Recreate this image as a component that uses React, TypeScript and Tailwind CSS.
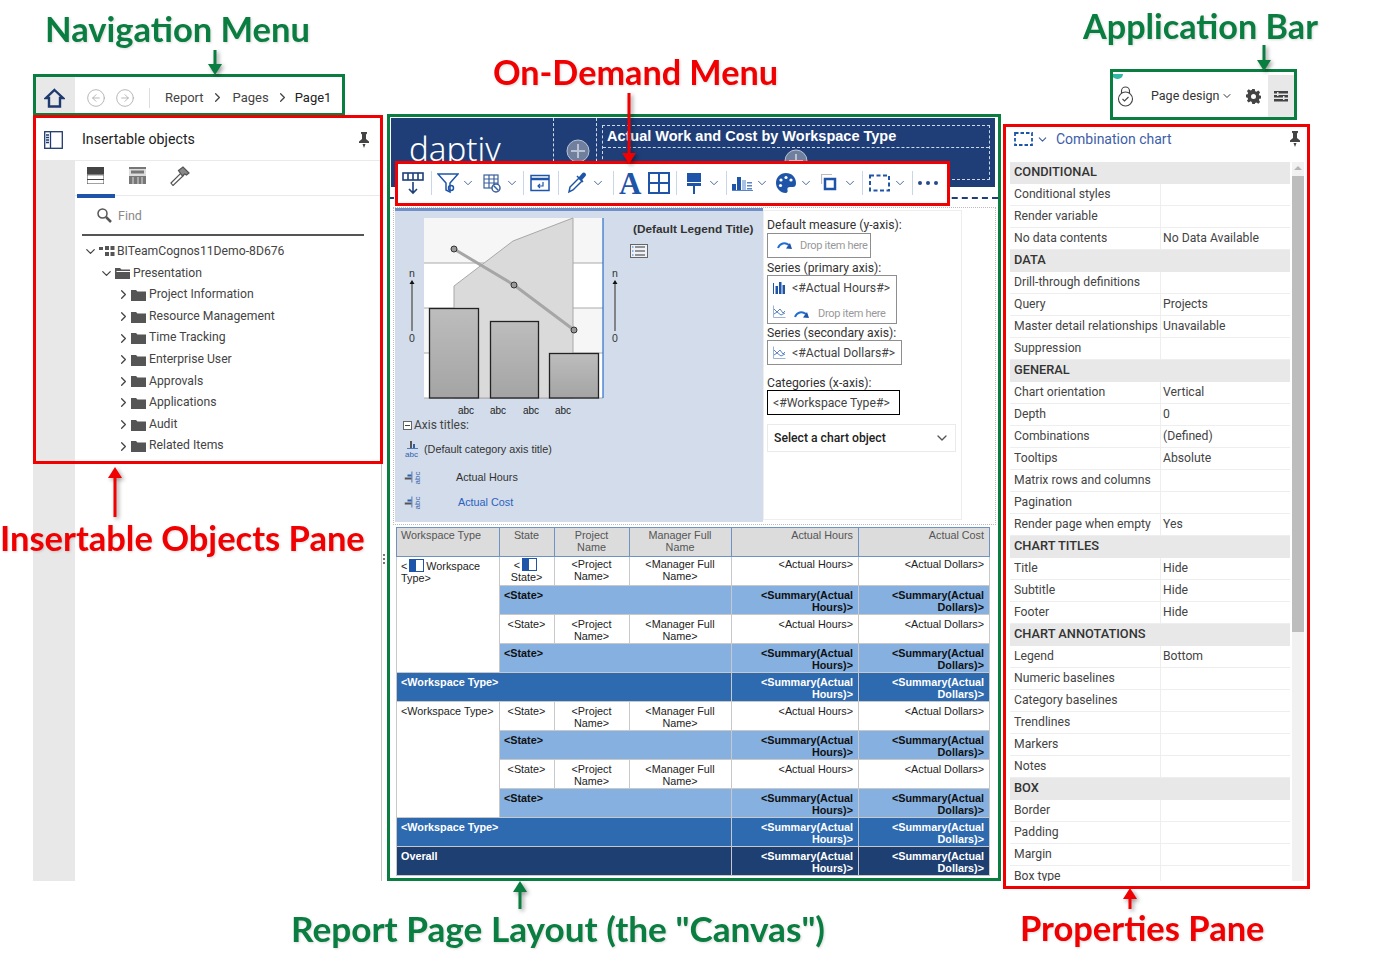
import { CircleArrowLeft, CircleArrowRight, ChevronDown, ChevronRight } from 'lucide-react';

const NAVY = '#1f3a6e';
const BLUE = '#1f55a8';

const treeItems = [
  'Project Information',
  'Resource Management',
  'Time Tracking',
  'Enterprise User',
  'Approvals',
  'Applications',
  'Audit',
  'Related Items',
];

// group rows have no value column, everything else is [name, value]
const properties: (string | [string, string])[] = [
  'CONDITIONAL',
  ['Conditional styles', ''],
  ['Render variable', ''],
  ['No data contents', 'No Data Available'],
  'DATA',
  ['Drill-through definitions', ''],
  ['Query', 'Projects'],
  ['Master detail relationships', 'Unavailable'],
  ['Suppression', ''],
  'GENERAL',
  ['Chart orientation', 'Vertical'],
  ['Depth', '0'],
  ['Combinations', '(Defined)'],
  ['Tooltips', 'Absolute'],
  ['Matrix rows and columns', ''],
  ['Pagination', ''],
  ['Render page when empty', 'Yes'],
  'CHART TITLES',
  ['Title', 'Hide'],
  ['Subtitle', 'Hide'],
  ['Footer', 'Hide'],
  'CHART ANNOTATIONS',
  ['Legend', 'Bottom'],
  ['Numeric baselines', ''],
  ['Category baselines', ''],
  ['Trendlines', ''],
  ['Markers', ''],
  ['Notes', ''],
  'BOX',
  ['Border', ''],
  ['Padding', ''],
  ['Margin', ''],
  ['Box type', ''],
];

function Pin() {
  return (
    <svg width="12" height="16" viewBox="0 0 12 16" fill="#444">
      <path d="M3 0h6v1.5L8 2.5V7l3 2.5V11H1V9.500L4 7V2.500L3 1.500z" />
      <path d="M4.500 12h3L6 16z" />
    </svg>
  );
}

function Folder({ open }: { open?: boolean }) {
  return (
    <svg width="15" height="12" viewBox="0 0 15 12" fill="#555" className="shrink-0">
      <path d="M0 1h5l1.500 1.500H15V12H0z" />
      {open && <path d="M1.500 4.500H15" stroke="#fff" strokeWidth="1" />}
    </svg>
  );
}

function Chev({ className }: { className: string }) {
  return <ChevronDown className={`shrink-0 ${className}`} size={14} strokeWidth={1.6} color="#3d5f9f" />;
}

function Sep({ className }: { className: string }) {
  return <div className={`w-px h-[24px] bg-[#c9d6e8] shrink-0 ${className}`} />;
}

function Toolbar() {
  return (
    <div className="absolute left-[9px] top-[89px] w-[550px] h-[40px] bg-white flex items-center z-10">
      <svg className="ml-[4px] shrink-0" width="24" height="24" viewBox="0 0 24 24" fill="none" stroke="#1d3f7a" strokeWidth="1.600">
        <rect x="2" y="2" width="20" height="7" />
        <path d="M7 2v7M12 2v7M17 2v7M12 11v11M8 18l4 4 4-4" />
      </svg>
      <Sep className="ml-[6px]" />
      <svg className="ml-[5px] shrink-0" width="22" height="22" viewBox="0 0 22 22" fill="none" stroke={BLUE} strokeWidth="1.500">
        <path d="M1 2h20l-8 9v9l-4-2v-7z" />
        <circle cx="14" cy="16" r="2.500" />
      </svg>
      <Chev className="ml-[2px]" />
      <svg className="ml-[8px] shrink-0" width="18" height="20" viewBox="0 0 18 20" fill="none" stroke="#3a5f9f" strokeWidth="1.200">
        <rect x="1" y="2" width="14" height="13" />
        <path d="M1 6h14M1 10h14M6 2v13M11 2v13" />
        <circle cx="13" cy="15" r="4" fill="#fff" strokeWidth="1.500" />
        <path d="M10.500 12.500l5 5" strokeWidth="1.500" />
      </svg>
      <Chev className="ml-[4px]" />
      <Sep className="ml-[4px]" />
      <svg className="ml-[6px] shrink-0" width="20" height="18" viewBox="0 0 20 18" fill="none" stroke={BLUE} strokeWidth="1.500">
        <rect x="1" y="1.500" width="18" height="15" />
        <path d="M1 5h18" strokeWidth="2.500" />
        <path d="M13 8v4H8M10 10l-2 2 2 2" strokeWidth="1.200" />
      </svg>
      <Sep className="ml-[8px]" />
      <svg className="ml-[8px] shrink-0" width="20" height="22" viewBox="0 0 20 22" fill="none" stroke={BLUE} strokeWidth="1.500">
        <path d="M2 20l1-5 9-9 3 3-9 9z" />
        <path d="M10 4l6 6M13 5l3-3.500c1-1 3 1 2 2l-3 3.500z" fill={BLUE} />
      </svg>
      <Chev className="ml-[4px]" />
      <Sep className="ml-[8px]" />
      <span className="ml-[5px] w-[22px] shrink-0 text-center font-['Liberation_Serif',serif] text-[31px] leading-none font-bold text-[#1f55a8]">A</span>
      <svg className="ml-[7px] shrink-0" width="22" height="22" viewBox="0 0 22 22" fill="none" stroke={BLUE} strokeWidth="2">
        <rect x="1" y="1" width="20" height="20" />
        <path d="M11 1v20M1 11h20" />
      </svg>
      <Sep className="ml-[6px]" />
      <svg className="ml-[9px] shrink-0" width="16" height="22" viewBox="0 0 16 22" fill={BLUE}>
        <rect x="1" y="1" width="14" height="9" />
        <path d="M1 11h14v3H1zM7 14h2v8H7z" />
      </svg>
      <Chev className="ml-[5px]" />
      <Sep className="ml-[5px]" />
      <svg className="ml-[5px] shrink-0" width="21" height="16" viewBox="0 0 21 16" fill="#5b84c4">
        <rect x="0" y="9" width="4" height="6" fill={BLUE} />
        <rect x="5" y="2" width="4" height="13" fill={BLUE} />
        <rect x="10" y="5" width="4" height="10" fill="#a9c1e4" />
        <rect x="15" y="7" width="5" height="1.500" />
        <rect x="15" y="10" width="5" height="1.500" />
        <rect x="15" y="13" width="5" height="1.500" />
        <rect x="0" y="15" width="21" height="1" />
      </svg>
      <Chev className="ml-[2px]" />
      <svg className="ml-[6px] shrink-0" width="22" height="22" viewBox="0 0 22 22" fill={BLUE}>
        <path d="M11 1C5 1 1 5.500 1 11s4.500 10 9.500 10c2 0 2.500-1.500 2-3-.5-1.800.5-3 2.500-3h3c2 0 3-1.500 3-4C21 5 16.500 1 11 1z" />
        <circle cx="6" cy="8" r="1.600" fill="#fff" />
        <circle cx="11" cy="5.500" r="1.600" fill="#fff" />
        <circle cx="16" cy="8" r="1.600" fill="#fff" />
        <circle cx="5.500" cy="13.500" r="1.600" fill="#fff" />
      </svg>
      <Chev className="ml-[2px]" />
      <svg className="ml-[8px] shrink-0" width="16" height="18" viewBox="0 0 16 18" fill="none">
        <path d="M0.500 10V.5H11" stroke="#bbb" strokeWidth="1.200" />
        <rect x="4" y="5" width="10" height="10" stroke={BLUE} strokeWidth="2.500" />
      </svg>
      <Chev className="ml-[6px]" />
      <Sep className="ml-[5px]" />
      <svg className="ml-[6px] shrink-0" width="21" height="18" viewBox="0 0 21 18" fill="none">
        <rect x="1" y="1.500" width="19" height="15" stroke={BLUE} strokeWidth="2" strokeDasharray="4 2.500" />
      </svg>
      <Chev className="ml-[3px]" />
      <Sep className="ml-[5px]" />
      <svg className="ml-[4px] shrink-0" width="22" height="6" viewBox="0 0 22 6" fill="#234a8c">
        <circle cx="3" cy="3" r="2" />
        <circle cx="11" cy="3" r="2" />
        <circle cx="19" cy="3" r="2" />
      </svg>
    </div>
  );
}

function ChartPreview() {
  return (
    <svg width="232" height="210" viewBox="0 0 232 210" className="shrink-0 font-['Liberation_Sans',sans-serif]">
      <defs>
        <linearGradient id="bar" x1="0" y1="0" x2="0" y2="1">
          <stop offset="0" stopColor="#bdbdbd" />
          <stop offset="1" stopColor="#a4a4a4" />
        </linearGradient>
      </defs>
      <rect x="29" y="8" width="179" height="45" fill="#f6f6f6" />
      <rect x="29" y="53" width="179" height="45" fill="#fff" />
      <rect x="29" y="98" width="179" height="45" fill="#f6f6f6" />
      <rect x="29" y="143" width="179" height="45" fill="#fff" />
      <path d="M29 53h179M29 98h179M29 143h179M29 188h179" stroke="#aaa" />
      <path d="M59 76L118 31L178 8V188H59z" fill="#dadada" stroke="#a8a8a8" />
      <path d="M208 8v180" stroke="#2a6fcc" strokeWidth="1.200" />
      <rect x="34.500" y="98.500" width="49" height="89.500" fill="url(#bar)" stroke="#222" strokeWidth="1.300" />
      <rect x="95.500" y="111.500" width="48" height="76.500" fill="url(#bar)" stroke="#222" strokeWidth="1.300" />
      <rect x="154.500" y="143.500" width="49" height="44.500" fill="url(#bar)" stroke="#222" strokeWidth="1.300" />
      <path d="M59 39L119 75L179 120" stroke="#a6a6a6" strokeWidth="3" fill="none" />
      {[[59, 39], [119, 75], [179, 120]].map(([cx, cy]) => (
        <circle key={cx} cx={cx} cy={cy} r="3" fill="#999" stroke="#333" />
      ))}
      {[17, 220].map((x) => (
        <g key={x} fontSize="10.500" fill="#333" textAnchor="middle">
          <text x={x} y="67">n</text>
          <path d={`M${x} 73v48`} stroke="#666" strokeWidth="1.500" />
          <path d={`M${x - 2.500} 74h5L${x} 70z`} fill="#111" />
          <text x={x} y="132">0</text>
        </g>
      ))}
      {[71, 103, 136, 168].map((x) => (
        <text key={x} x={x} y="204" fontSize="10" fill="#222" textAnchor="middle">abc</text>
      ))}
    </svg>
  );
}

function AxisIcon({ rotate }: { rotate?: boolean }) {
  return (
    <svg width="15" height="16" viewBox="0 0 15 16" className={rotate ? 'shrink-0 -rotate-90' : 'shrink-0'} fill="#2f62ad">
      <rect x="5" y="0" width="2" height="7" fill="#555" />
      <rect x="8" y="3" width="2" height="4" />
      <rect x="2" y="7" width="11" height="0.800" />
      <text x="0" y="15.500" fontSize="8" fontFamily="Liberation Sans">abc</text>
    </svg>
  );
}

function CurvedArrow() {
  return (
    <svg width="16" height="9" viewBox="0 0 16 9" className="shrink-0" fill="none">
      <path d="M1 7C3 2 8 1 12 4" stroke="#1f6fcf" strokeWidth="2" />
      <path d="M15 8L9 7.500 13 2z" fill="#1f55a8" />
    </svg>
  );
}

function BarIcon() {
  return (
    <svg width="13" height="13" viewBox="0 0 13 13" className="shrink-0" fill={BLUE}>
      <path d="M0 2h1v11H0zM2.500 5h2.500v8H2.500zM6 1h2.500v12H6zM9.500 4H12v9H9.500z" />
    </svg>
  );
}

function LineIcon() {
  return (
    <svg width="13" height="13" viewBox="0 0 13 13" className="shrink-0" fill="none" stroke="#5a83c0">
      <path d="M.5 .5v12h12" stroke="#9fb4d4" />
      <path d="M1 4l3 3 3-3 3 4 2-2M1 9l3-2 4 3 4-2" />
    </svg>
  );
}

function DropBox({ children, className }: { children: React.ReactNode; className: string }) {
  return <div className={`border border-[#8e8e8e] ${className}`}>{children}</div>;
}

function ChartSlots() {
  return (
    <div className="w-[199px] h-[310px] mt-[1px] border border-[#eeeeee] pl-[3px] pt-[7px] text-[12.200px] leading-[14px] text-[#333] shrink-0">
      <div>Default measure (y-axis):</div>
      <DropBox className="w-[104px] h-[25px] mt-[1px] flex items-center pl-[9px] gap-[7px] text-[#999] text-[11px] tracking-[-0.3px]">
        <CurvedArrow /><span className="whitespace-nowrap">Drop item here</span>
      </DropBox>
      <div className="mt-[3px]">Series (primary axis):</div>
      <DropBox className="w-[130px] h-[49px] pl-[5px]">
        <div className="flex items-center gap-[6px] h-[23px] text-[#444]"><BarIcon /><span className="whitespace-nowrap">{'<#Actual Hours#>'}</span></div>
        <div className="flex items-center gap-[8px] h-[18px] mt-[6px] text-[#999] text-[11px] tracking-[-0.3px]"><span className="-mt-[6px]"><LineIcon /></span><CurvedArrow /><span className="whitespace-nowrap">Drop item here</span></div>
      </DropBox>
      <div className="mt-[2px]">Series (secondary axis):</div>
      <DropBox className="w-[135px] h-[25px] flex items-center gap-[6px] pl-[5px] text-[#444]">
        <LineIcon /><span className="whitespace-nowrap">{'<#Actual Dollars#>'}</span>
      </DropBox>
      <div className="mt-[11px]">Categories (x-axis):</div>
      <div className="w-[133px] h-[25px] border border-black flex items-center pl-[5px] text-[#444] whitespace-nowrap">{'<#Workspace Type#>'}</div>
      <div className="w-[189px] h-[28px] mt-[9px] border border-[#eaeaea] flex items-center justify-between pl-[6px] pr-[5px] font-medium text-[#222]">
        <span>Select a chart object</span>
        <ChevronDown size={16} color="#555" />
      </div>
    </div>
  );
}

const TH = "border border-[#6f92c4] bg-[#dcdcdc] pl-[4px] pr-[5px] pt-[1px] align-top font-normal text-[#555]";
const TD = "border border-[#c8c8c8] bg-white pl-[4px] pr-[5px] align-top text-[#222]";
const SUM = "border border-[#c8c8c8] bg-[#85b0e0] pl-[4px] pr-[5px] pt-[3px] align-top font-bold text-[#111]";
const WS = "border border-[#c8c8c8] bg-[#2e6ab0] pl-[4px] pr-[5px] pt-[3px] align-top font-bold text-white";
const TOT = "border border-[#c8c8c8] bg-[#1e3f72] pl-[4px] pr-[5px] pt-[3px] align-top font-bold text-white";

function ListIcon() {
  return (
    <svg width="15" height="13" viewBox="0 0 15 13" className="inline-block align-[-2px] mx-[2px]">
      <rect x="0.500" y="0.500" width="14" height="12" fill="#fff" stroke="#1f55a8" />
      <rect x="1" y="1" width="6" height="11" fill="#1f55a8" />
    </svg>
  );
}

function DetailRow({ first, icon, label }: { first?: boolean; icon?: boolean; label?: React.ReactNode }) {
  const pad = icon ? 'pt-[1px]' : 'pt-[3px]';
  return (
    <>
      <tr className="h-[29px]">
        {first && <td rowSpan={4} className={`${TD} ${icon ? 'pt-[2px]' : 'pt-[3px]'} whitespace-nowrap`}>{label}</td>}
        <td className={`${TD} ${pad} text-center`}>{icon ? <>{'<'}<ListIcon /><br />{'State>'}</> : '<State>'}</td>
        <td className={`${TD} ${pad} text-center`}>{'<Project Name>'}</td>
        <td className={`${TD} ${pad} text-center`}>{'<Manager Full Name>'}</td>
        <td className={`${TD} ${pad} text-right`}>{'<Actual Hours>'}</td>
        <td className={`${TD} ${pad} text-right`}>{'<Actual Dollars>'}</td>
      </tr>
      <tr className="h-[29px]">
        <td colSpan={3} className={SUM}>{'<State>'}</td>
        <td className={`${SUM} text-right`}>{'<Summary(Actual Hours)>'}</td>
        <td className={`${SUM} text-right`}>{'<Summary(Actual Dollars)>'}</td>
      </tr>
    </>
  );
}

function TotalRow({ label, cls }: { label: string; cls: string }) {
  return (
    <tr className="h-[29px]">
      <td colSpan={4} className={cls}>{label}</td>
      <td className={`${cls} text-right`}>{'<Summary(Actual Hours)>'}</td>
      <td className={`${cls} text-right`}>{'<Summary(Actual Dollars)>'}</td>
    </tr>
  );
}

function ReportTable() {
  return (
    <table className="table-fixed border-collapse w-[593px] ml-[8px] mt-[2px] font-['Liberation_Sans',sans-serif] text-[10.800px] leading-[12px]">
      <colgroup>
        <col className="w-[103px]" />
        <col className="w-[55px]" />
        <col className="w-[75px]" />
        <col className="w-[102px]" />
        <col className="w-[127px]" />
        <col className="w-[131px]" />
      </colgroup>
      <thead>
        <tr className="h-[29px]">
          <th className={`${TH} text-left`}>Workspace Type</th>
          <th className={TH}>State</th>
          <th className={TH}>Project<br />Name</th>
          <th className={TH}>Manager Full Name</th>
          <th className={`${TH} text-right`}>Actual Hours</th>
          <th className={`${TH} text-right`}>Actual Cost</th>
        </tr>
      </thead>
      <tbody>
        <DetailRow first icon label={<>{'<'}<ListIcon />{'Workspace'}<br />{'Type>'}</>} />
        <DetailRow />
        <TotalRow label="<Workspace Type>" cls={WS} />
        <DetailRow first label="<Workspace Type>" />
        <DetailRow />
        <TotalRow label="<Workspace Type>" cls={WS} />
        <TotalRow label="Overall" cls={TOT} />
      </tbody>
    </table>
  );
}

function LeftColumn() {
  return (
    <div className="w-[349px] h-[807px] flex flex-col shrink-0 overflow-hidden">
      <div className="h-[44px] flex items-center pt-[3px] shrink-0 text-[13px]">
        <div className="w-[42px] h-[41px] bg-[#e8e8e8] flex items-center justify-center">
          <svg width="21" height="20" viewBox="0 0 21 20" fill="none" stroke={NAVY} strokeWidth="2.400">
            <path d="M10.500 2L19 10H16V18.500H5V10H2z" />
          </svg>
        </div>
        <CircleArrowLeft className="ml-[11px]" size={20} strokeWidth={1} color="#aaa" />
        <CircleArrowRight className="ml-[9px]" size={20} strokeWidth={1} color="#aaa" />
        <div className="w-px h-[20px] bg-[#ddd] ml-[14px]" />
        <span className="ml-[15px] text-[#444]">Report</span>
        <ChevronRight className="ml-[6px]" size={15} color="#444" />
        <span className="ml-[8px] text-[#444]">Pages</span>
        <ChevronRight className="ml-[6px]" size={15} color="#444" />
        <span className="ml-[5px] text-[#222]">Page1</span>
      </div>
      <div className="flex-1 min-h-0 flex flex-col border-r border-[#c4c4c4]">
        <div className="h-[42px] flex items-center pt-[2px] shrink-0">
          <svg className="ml-[11px]" width="19" height="18" viewBox="0 0 19 18" fill="none" stroke={NAVY} strokeWidth="1.300">
            <rect x="0.700" y="0.700" width="17.600" height="16.600" />
            <path d="M6.500 1v16M2 4h3M2 6.500h3M2 9h3M2 11.500h3" />
          </svg>
          <span className="ml-[19px] text-[14.200px] text-[#222]">Insertable objects</span>
          <div className="ml-auto mr-[11px]"><Pin /></div>
        </div>
        <div className="flex flex-1 min-h-0">
          <div className="w-[42px] bg-[#e8e8e8] shrink-0" />
          <div className="flex-1 min-w-0">
            <div className="h-[36px] border-y border-[#eaeaea] relative flex items-start">
              <svg className="ml-[12px] mt-[6px]" width="17" height="17" viewBox="0 0 17 17">
                <rect width="17" height="7" fill="#444" />
                <rect y="7.800" width="17" height="9.200" fill="#fff" stroke="#444" />
                <rect y="12" width="17" height="1" fill="#444" />
              </svg>
              <svg className="ml-[25px] mt-[6px]" width="17" height="17" viewBox="0 0 17 17" fill="#777">
                <path d="M0 0h17v17H0z" fill="#ddd" />
                <path d="M0 0h17v2H0zM2 3.500h13v3H2zM0 9h17v8H0z" />
                <path d="M4 10v7M9 10v7M13 10v7" stroke="#ddd" />
              </svg>
              <svg className="ml-[24px] mt-[5px]" width="20" height="20" viewBox="0 0 20 20" fill="none" stroke="#555" strokeWidth="1.200">
                <path d="M1 17L11 7l2.500 2.500L3 19.500z" />
                <path d="M8.500 4.500L13 1l6 6-2.500 2-2-1-2 2z" fill="#888" />
              </svg>
              <div className="absolute left-[2px] bottom-[-3px] w-[38px] h-[4px] bg-[#1f55a8]" />
            </div>
            <div className="h-[40px] mx-[7px] w-[282px] border-b-2 border-[#555] flex items-center pl-[15px]">
              <svg width="15" height="15" viewBox="0 0 15 15" fill="none" stroke="#555">
                <circle cx="5.500" cy="5.500" r="4.500" strokeWidth="1.500" />
                <path d="M9 9l5 5" strokeWidth="2.500" />
              </svg>
              <span className="ml-[6px] text-[12.500px] text-[#888] pt-[2px]">Find</span>
            </div>
            <div className="mt-[5px] text-[12.200px] leading-[21.600px] text-[#444] whitespace-nowrap">
              <div className="flex items-center pl-[8px]">
                <ChevronDown size={15} color="#444" />
                <svg className="ml-[1px]" width="16" height="11" viewBox="0 0 16 11" fill="#555">
                  <path d="M0 1h4v3H0zM6 0h4v4H6zM11.500 0h4v4h-4zM6 6h4v4H6zM11.500 6h4v4h-4z" />
                </svg>
                <span className="ml-[2px]">BITeamCognos11Demo-8D676</span>
              </div>
              <div className="flex items-center pl-[24px]">
                <ChevronDown size={15} color="#444" />
                <span className="ml-[1px]"><Folder open /></span>
                <span className="ml-[3px]">Presentation</span>
              </div>
              {treeItems.map((item) => (
                <div key={item} className="flex items-center pl-[41px]">
                  <ChevronRight size={15} color="#444" />
                  <Folder />
                  <span className="ml-[3px]">{item}</span>
                </div>
              ))}
            </div>
          </div>
        </div>
      </div>
    </div>
  );
}

function PlusCircle({ className }: { className: string }) {
  return (
    <svg className={className} width="24" height="24" viewBox="0 0 24 24" fill="#6f7f9d" stroke="#b9c2d3">
      <circle cx="12" cy="12" r="11" />
      <path d="M12 5v14M5 12h14" strokeWidth="2" />
    </svg>
  );
}

function Canvas() {
  return (
    <div className="w-[610px] ml-[6px] pt-[44px] shrink-0 relative">
      <div className="absolute -left-[5px] top-[480px] flex flex-col gap-[2px]">
        <div className="w-[2px] h-[2px] bg-[#777]" />
        <div className="w-[2px] h-[2px] bg-[#777]" />
        <div className="w-[2px] h-[2px] bg-[#777]" />
      </div>
      <Toolbar />
      <div className="mx-[3px] h-[69px] bg-[#1f3e78] flex relative overflow-hidden">
        <div className="w-[163px] border-r border-dashed border-[#cfd8e8] pl-[18px] pt-[9px] font-['Noto_Sans',sans-serif] text-[33px] leading-[44px] font-light text-white">daptiv</div>
        <div className="w-[43px] border-r border-dashed border-[#cfd8e8] flex justify-center pl-[6px] pt-[21px]">
          <PlusCircle className="shrink-0" />
        </div>
        <div className="ml-[5px] mt-[7px] w-[388px] h-[55px] border border-dashed border-[#cfd8e8] flex flex-col font-['Liberation_Sans',sans-serif]">
          <div className="h-[22px] flex items-center pl-[4px] text-[14.500px] font-bold text-white whitespace-nowrap border-b border-dashed border-[#cfd8e8]">Actual Work and Cost by Workspace Type</div>
          <div className="flex justify-center pt-[1px]"><PlusCircle className="shrink-0" /></div>
        </div>
      </div>
      <div className="mt-[10px] border-t-2 border-dashed border-[#1f3e78]" />
      <div className="ml-[5px] mt-[8px] w-[603px] h-[318px] border border-dotted border-[#bbbbbb] pl-[1px] pt-[1px] flex">
        <div className="w-[368px] h-[314px] bg-[#d2dcea] border-t-[3px] border-[#6f8fc6] shrink-0 -mt-[1px]">
          <div className="flex h-[207px]">
            <div className="-mt-[1px]"><ChartPreview /></div>
            <div className="pl-[3px] pt-[11px]">
              <div className="ml-[3px] font-['Liberation_Sans',sans-serif] text-[11.800px] leading-[14px] font-bold text-[#333] whitespace-nowrap">(Default Legend Title)</div>
              <svg className="mt-[8px]" width="18" height="14" viewBox="0 0 18 14" fill="none">
                <rect x="0.500" y="0.500" width="17" height="13" fill="#eef2f8" stroke="#666" />
                <path d="M5 3h10M5 7h10M5 11h10" stroke="#333" />
                <path d="M2 3h1.500M2 7h1.500M2 11h1.500" stroke="#2a6fcc" />
              </svg>
            </div>
          </div>
          <div className="flex items-center h-[14px] pl-[8px] text-[12px] text-[#444]">
            <div className="w-[9px] h-[9px] border border-[#666] bg-white flex items-center justify-center"><div className="w-[5px] h-px bg-[#444]" /></div>
            <span className="ml-[2px] whitespace-nowrap">Axis titles:</span>
          </div>
          <div className="font-['Liberation_Sans',sans-serif] text-[10.800px] text-[#333] leading-[14px]">
            <div className="flex items-center h-[17px] mt-[8px] pl-[10px]">
              <AxisIcon /><span className="ml-[4px] whitespace-nowrap">(Default category axis title)</span>
            </div>
            <div className="flex items-center h-[17px] mt-[11px] pl-[10px]">
              <AxisIcon rotate /><span className="ml-[36px] whitespace-nowrap">Actual Hours</span>
            </div>
            <div className="flex items-center h-[17px] mt-[8px] pl-[10px]">
              <AxisIcon rotate /><span className="ml-[38px] whitespace-nowrap text-[#2a62c0]">Actual Cost</span>
            </div>
          </div>
        </div>
        <ChartSlots />
      </div>
      <ReportTable />
    </div>
  );
}

function RightColumn() {
  return (
    <div className="w-[304px] ml-[5px] shrink-0 h-[807px] flex flex-col overflow-hidden">
      <div className="h-[44px] ml-[107px] w-[184px] flex items-center text-[12.500px] text-[#333] relative">
        <div className="absolute left-[2px] top-[0px] w-[11px] h-[5px] rounded-b-full bg-[#2fb8a5]" />
        <svg className="ml-[7px]" width="17" height="21" viewBox="0 0 17 21" fill="none" stroke="#444" strokeWidth="1.100">
          <path d="M4.500 7V5a4 4 0 018 0v2" />
          <circle cx="8.500" cy="13" r="7" />
          <path d="M5.500 13l2 2 4-4" />
        </svg>
        <span className="ml-[17px]">Page design</span>
        <ChevronDown className="ml-[2px]" size={12} />
        <svg className="ml-[13px]" width="15" height="15" viewBox="0 0 24 24" fill="#444">
          <path fillRule="evenodd" d="M14 1l.7 3.400 2 .9 3-1.900 2.800 2.800-1.900 3 .9 2 3.400.7v4l-3.400.7-.9 2 1.900 3-2.800 2.800-3-1.900-2 .9L14 25h-4l-.7-3.400-2-.9-3 1.900-2.800-2.800 1.900-3-.9-2L-.9 14v-4l3.400-.7.9-2-1.900-3 2.800-2.800 3 1.900 2-.9L10 1zM12 9a4 4 0 100 8 4 4 0 000-8z" transform="translate(0,-1)" />
        </svg>
        <div className="ml-auto w-[26px] h-[42px] bg-[#e8e8e8] flex items-center justify-center">
          <svg width="14" height="11" viewBox="0 0 14 11" fill="#444">
            <path d="M0 0h14v2.500H0zM0 4h14v2.500H0zM0 8h14v2.500H0z" />
            <path d="M3 1h1.500v4H3zM9 5h1.500v4H9z" fill="#e8e8e8" />
          </svg>
        </div>
      </div>
      <div className="h-[34px] mt-[4px] flex items-center shrink-0">
        <svg className="ml-[11px]" width="19" height="14" viewBox="0 0 19 14" fill="none">
          <rect x="1" y="1" width="17" height="12" stroke={BLUE} strokeWidth="1.800" strokeDasharray="3.500 2" />
        </svg>
        <ChevronDown className="ml-[3px]" size={13} color="#3d5f9f" />
        <span className="ml-[7px] text-[14px] text-[#3c5ea8]">Combination chart</span>
        <div className="ml-auto mr-[6px]"><Pin /></div>
      </div>
      <div className="flex flex-1 min-h-0 mt-[6px] pl-[7px]">
        <div className="w-[280px] shrink-0 text-[12.200px] text-[#444]">
          {properties.map((p) =>
            typeof p === 'string' ? (
              <div key={p} className="h-[22px] bg-[#e8e8e8] pl-[4px] pb-[2px] flex items-center font-medium text-[12.800px] text-[#333]">{p}</div>
            ) : (
              <div key={p[0]} className="h-[22px] border-b border-[#eeeeee] flex items-center whitespace-nowrap">
                <span className="w-[151px] shrink-0 h-full pl-[4px] flex items-center border-r border-[#eeeeee]">{p[0]}</span>
                <span className="pl-[2px]">{p[1]}</span>
              </div>
            )
          )}
        </div>
        <div className="w-[12px] ml-[2px] bg-[#f1f1f1] shrink-0 flex flex-col items-center pt-[4px]">
          <div className="w-0 h-0 border-x-[4px] border-x-transparent border-b-[4px] border-b-[#b5b5b5]" />
          <div className="w-[12px] h-[456px] mt-[6px] bg-[#bdbdbd]" />
        </div>
      </div>
    </div>
  );
}

function DownArrow({ left, top, height, color }: { left: number; top: number; height: number; color: string }) {
  return (
    <svg className="absolute z-30 drop-shadow-[2px_2px_2px_rgba(0,0,0,0.4)]" style={{ left, top }} width="16" height={height} viewBox={`0 0 16 ${height}`} fill={color}>
      <rect x="6.500" y="0" width="3" height={height - 10} />
      <path d={`M1 ${height - 11}H15L8 ${height}z`} />
    </svg>
  );
}

function UpArrow({ left, top, height, color }: { left: number; top: number; height: number; color: string }) {
  return (
    <svg className="absolute z-30 drop-shadow-[2px_2px_2px_rgba(0,0,0,0.4)]" style={{ left, top }} width="16" height={height} viewBox={`0 0 16 ${height}`} fill={color}>
      <rect x="6.500" y="10" width="3" height={height - 10} />
      <path d="M1 11H15L8 0z" />
    </svg>
  );
}

const LABEL = "absolute z-30 font-['Lato',sans-serif] font-bold leading-[44px] whitespace-nowrap drop-shadow-[1px_1px_1px_rgba(0,0,0,0.15)]";

function Annotations() {
  return (
    <>
      <div className="absolute z-20 left-[33px] top-[74px] w-[312px] h-[42px] border-[3px] border-[#0a7d40]" />
      <div className="absolute z-20 left-[33px] top-[115px] w-[350px] h-[349px] border-[3px] border-[#f00000]" />
      <div className="absolute z-20 left-[387px] top-[114px] w-[614px] h-[767px] border-[3px] border-[#0a7d40]" />
      <div className="absolute z-20 left-[395px] top-[161px] w-[555px] h-[45px] border-[3px] border-[#f00000]" />
      <div className="absolute z-20 left-[1110px] top-[69px] w-[187px] h-[51px] border-[3px] border-[#0a7d40]" />
      <div className="absolute z-20 left-[1003px] top-[124px] w-[307px] h-[765px] border-[3px] border-[#f00000]" />

      <div className={`${LABEL} text-[34.500px] left-[45px] top-[7px] text-[#0a7d40]`}>Navigation Menu</div>
      <div className={`${LABEL} text-[34.200px] left-[493px] top-[50px] text-[#f00000]`}>On-Demand Menu</div>
      <div className={`${LABEL} text-[34.200px] left-[1083px] top-[4px] text-[#0a7d40]`}>Application Bar</div>
      <div className={`${LABEL} text-[34.500px] left-[0px] top-[516px] text-[#f00000]`}>Insertable Objects Pane</div>
      <div className={`${LABEL} text-[35.200px] left-[291px] top-[906px] text-[#0a7d40]`}>Report Page Layout (the "Canvas")</div>
      <div className={`${LABEL} text-[34.500px] left-[1020px] top-[906px] text-[#f00000]`}>Properties Pane</div>

      <DownArrow left={207} top={50} height={25} color="#0a7d40" />
      <DownArrow left={621} top={93} height={71} color="#f00000" />
      <DownArrow left={1256} top={45} height={26} color="#0a7d40" />
      <UpArrow left={107} top={467} height={50} color="#f00000" />
      <UpArrow left={512} top={881} height={28} color="#0a7d40" />
      <UpArrow left={1122} top={888} height={21} color="#f00000" />
    </>
  );
}

export default function App() {
  return (
    <div className="relative w-[1374px] h-[962px] bg-white overflow-hidden font-['Roboto',sans-serif]">
      <div className="flex pl-[33px] pt-[74px]">
        <LeftColumn />
        <Canvas />
        <RightColumn />
      </div>
      <Annotations />
    </div>
  );
}
